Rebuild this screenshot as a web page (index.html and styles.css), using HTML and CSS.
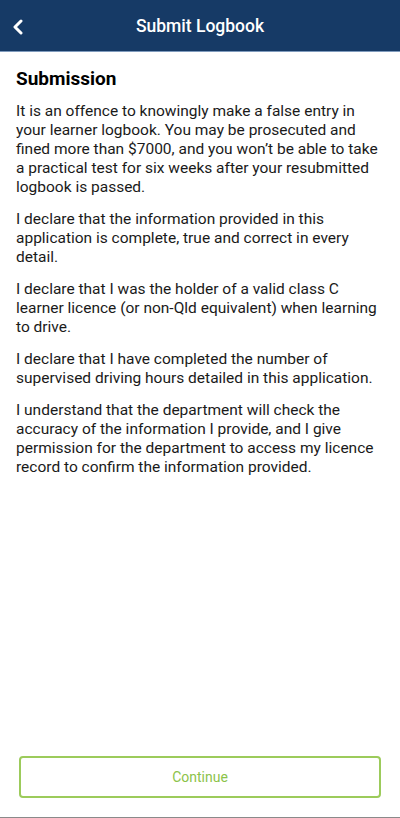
FILE: index.html
```html
<!DOCTYPE html>
<html>
<head>
<meta charset="utf-8">
<link rel="stylesheet" href="styles.css">
</head>
<body>
<div class="screen">
  <header class="topbar">
    <button class="back" aria-label="Back">
      <svg width="12" height="16" viewBox="0 0 12 16"><path d="M9 2 L3 8 L9 14" fill="none" stroke="#fff" stroke-width="3" stroke-linecap="round" stroke-linejoin="round"/></svg>
    </button>
    <h1 class="title">Submit Logbook</h1>
  </header>
  <main class="content">
    <h2 class="heading">Submission</h2>
    <p>It is an offence to knowingly make a false entry in your learner logbook. You may be prosecuted and fined more than $7000, and you won’t be able to take a practical test for six weeks after your resubmitted logbook is passed.</p>
    <p>I declare that the information provided in this application is complete, true and correct in every detail.</p>
    <p>I declare that I was the holder of a valid class C learner licence (or non-Qld equivalent) when learning to drive.</p>
    <p>I declare that I have completed the number of supervised driving hours detailed in this application.</p>
    <p>I understand that the department will check the accuracy of the information I provide, and I give permission for the department to access my licence record to confirm the information provided.</p>
  </main>
  <footer class="footer">
    <button class="continue">Continue</button>
  </footer>
</div>
</body>
</html>
```
FILE: styles.css
```css
html, body {
  margin: 0;
  padding: 0;
  background: #fff;
}
.screen {
  width: 400px;
  height: 818px;
  display: flex;
  flex-direction: column;
  font-family: Roboto, "Liberation Sans", sans-serif;
  color: #111;
  box-sizing: border-box;
  border-bottom: 1px solid #8a8a8a;
}
.topbar {
  height: 51px;
  background: #163a66;
  border-bottom: 1px solid #7f9bbd;
  display: flex;
  align-items: center;
  justify-content: center;
  position: relative;
  flex-shrink: 0;
}
.back {
  position: absolute;
  left: 12px;
  top: 19px;
  background: none;
  border: 0;
  padding: 0;
  width: 14px;
  height: 16px;
  display: flex;
}
.title {
  margin: 0;
  color: #fff;
  font-size: 17.5px;
  font-weight: 500;
  line-height: 22px;
}
.content {
  flex: 1;
  padding: 16px 16px 0 16px;
}
.heading {
  margin: 0 0 12px 0;
  font-size: 19px;
  font-weight: 700;
  line-height: 22px;
  color: #000;
}
.content p {
  margin: 0 0 13px 0;
  font-size: 15.5px;
  line-height: 19px;
  color: #1a1a1a;
}
.footer {
  padding: 0 19px 19px 19px;
  flex-shrink: 0;
}
.continue {
  width: 100%;
  height: 42px;
  background: #fff;
  border: 2px solid #9ccb5b;
  border-radius: 4px;
  color: #8cc34a;
  font-family: Roboto, "Liberation Sans", sans-serif;
  font-size: 14px;
  display: block;
}
```
